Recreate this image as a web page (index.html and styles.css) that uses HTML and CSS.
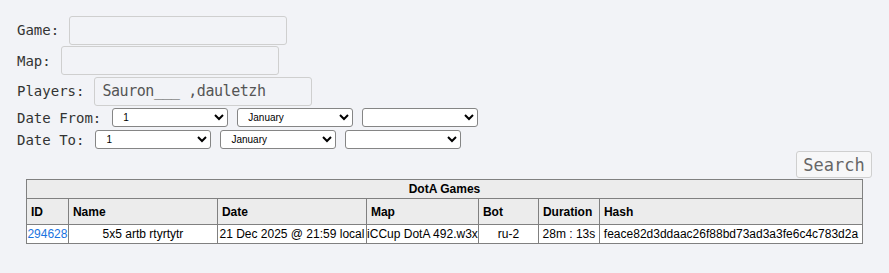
FILE: index.html
```html
<!DOCTYPE html>
<html>

<head>
    <title>DotA Games</title>
    <link rel="stylesheet" href="styles.css">
</head>

<body>
    <form class="search">
        <div class="row">
            <label>Game:</label>
            <input type="text" class="field">
        </div>
        <div class="row">
            <label>Map:</label>
            <input type="text" class="field">
        </div>
        <div class="row">
            <label>Players:</label>
            <input type="text" class="field" value="Sauron___ ,dauletzh">
        </div>
        <div class="row date-row">
            <label>Date From:</label>
            <select class="pick"><option>1</option></select>
            <select class="pick"><option>January</option></select>
            <select class="pick"><option></option></select>
        </div>
        <div class="row date-row">
            <label>Date To:</label>
            <select class="pick"><option>1</option></select>
            <select class="pick"><option>January</option></select>
            <select class="pick"><option></option></select>
        </div>
        <div class="actions">
            <button type="button" class="button">Search</button>
        </div>
    </form>

    <table class="games">
        <colgroup>
            <col style="width: 42px">
            <col style="width: 149px">
            <col style="width: 149px">
            <col style="width: 112px">
            <col style="width: 60px">
            <col style="width: 61px">
            <col style="width: 263px">
        </colgroup>
        <tr>
            <th colspan="7" class="title">DotA Games</th>
        </tr>
        <tr>
            <th>ID</th>
            <th>Name</th>
            <th>Date</th>
            <th>Map</th>
            <th>Bot</th>
            <th>Duration</th>
            <th>Hash</th>
        </tr>
        <tr>
            <td><a href="#">294628</a></td>
            <td>5x5 artb rtyrtytr</td>
            <td>21 Dec 2025 @ 21:59 local</td>
            <td>iCCup DotA 492.w3x</td>
            <td>ru-2</td>
            <td>28m : 13s</td>
            <td>feace82d3ddaac26f88bd73ad3a3fe6c4c783d2a</td>
        </tr>
    </table>
</body>

</html>
```

FILE: styles.css
```css
body {
    margin: 0;
    padding: 15px 17px 0 17px;
    background: #f2f3f7;
    font-family: "DejaVu Sans Mono", monospace;
    font-size: 14px;
    color: #333;
}

.search {
    margin: 0;
}

.row {
    display: flex;
    align-items: center;
    gap: 10px;
    height: 30.5px;
}

.row label {
    white-space: pre;
}

.field {
    box-sizing: border-box;
    width: 218px;
    height: 29px;
    margin: 0;
    padding: 0 6px 0 7px;
    background: #f2f3f7;
    border: 1px solid #cfcfcf;
    border-radius: 3px;
    font-family: "DejaVu Sans Mono", monospace;
    font-size: 15px;
    letter-spacing: -0.45px;
    color: #555;
}

.date-row {
    height: 22px;
    gap: 9px;
}

.date-row label {
    margin-right: 2px;
}

.pick {
    box-sizing: border-box;
    width: 116px;
    height: 19px;
    margin: 0;
    padding: 0 0 0 6px;
    background: #fff;
    border: 1px solid #858585;
    border-radius: 3px;
    font-family: "Liberation Sans", Arial, sans-serif;
    font-size: 10px;
    color: #000;
}

.actions {
    display: flex;
    justify-content: flex-end;
    height: 27.5px;
    padding-top: 0.5px;
}

.button {
    box-sizing: border-box;
    width: 76px;
    height: 27px;
    padding: 0;
    background: #f7f7f8;
    border: 1px solid #cfcfcf;
    border-radius: 3px;
    font-family: "DejaVu Sans Mono", monospace;
    font-size: 17px;
    color: #666;
}

.games {
    table-layout: fixed;
    width: 836px;
    margin: 0 auto;
    border-collapse: collapse;
    font-family: "Liberation Sans", Arial, sans-serif;
    font-size: 12px;
    line-height: 14px;
    color: #000;
}

.games th,
.games td {
    border: 1px solid #808080;
    white-space: nowrap;
    overflow: hidden;
}

.games th {
    background: #ececec;
    text-align: left;
    padding: 6px 4px 5px 4px;
}

.games th.title {
    text-align: center;
    padding: 2px 4px;
}

.games td {
    background: #fff;
    text-align: center;
    padding: 2px 0;
}

.games a {
    color: #1a73e0;
    text-decoration: none;
}
```
